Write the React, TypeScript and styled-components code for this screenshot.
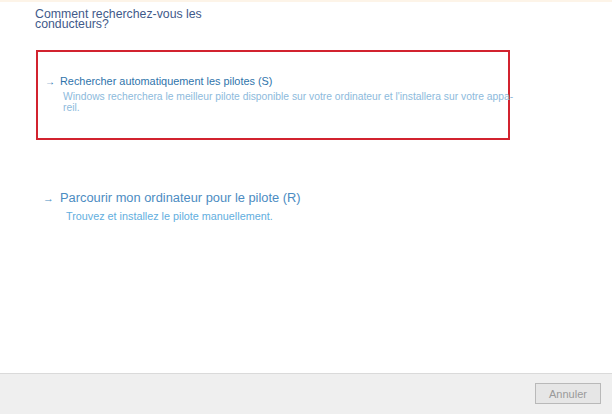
import React from 'react';
import styled, { createGlobalStyle } from 'styled-components';

const GlobalStyle = createGlobalStyle`
  html, body {
    margin: 0;
    padding: 0;
    background: #ffffff;
  }
  body {
    font-family: 'Liberation Sans', Arial, sans-serif;
  }
`;

const Window = styled.div`
  width: 612px;
  height: 414px;
  display: flex;
  flex-direction: column;
  background: #ffffff;
  border-top: 2px solid #fdf4e8;
  box-sizing: border-box;
  overflow: hidden;
`;

const Content = styled.div`
  flex: 1;
  padding: 7px 0 0 35px;
`;

const Title = styled.h1`
  margin: 0;
  width: 180px;
  font-size: 12.3px;
  font-weight: normal;
  line-height: 10px;
  color: #3f5a8a;
`;

const Option = styled.div<{ $selected?: boolean }>`
  box-sizing: border-box;
  width: 474px;
  border: 2px solid ${(p) => (p.$selected ? '#d2232f' : 'transparent')};
  padding: ${(p) => (p.$selected ? '23px 0 0 8px' : '0 0 0 8px')};
  height: ${(p) => (p.$selected ? '90px' : 'auto')};
  margin-left: 1px;
`;

const First = styled.div`
  margin-top: 21px;
`;

const Second = styled.div`
  margin-top: 48px;
  margin-left: -2px;
`;

const LinkRow = styled.div<{ $big?: boolean }>`
  display: flex;
  align-items: baseline;
  gap: ${(p) => (p.$big ? '6px' : '5px')};
  font-size: ${(p) => (p.$big ? '12.85px' : '10.9px')};
  line-height: ${(p) => (p.$big ? '16px' : '13px')};
  color: ${(p) => (p.$big ? '#4c8cc2' : '#2f74ab')};
  white-space: nowrap;
`;

const Arrow = styled.span<{ $big?: boolean }>`
  font-size: ${(p) => (p.$big ? '11px' : '10px')};
  margin-left: -1px;
`;

const Desc = styled.p<{ $big?: boolean }>`
  margin: ${(p) => (p.$big ? '5px 0 0 22px' : '3px 0 0 17px')};
  width: 456px;
  font-size: ${(p) => (p.$big ? '10.8px' : '10.3px')};
  line-height: 11px;
  color: ${(p) => (p.$big ? '#62aede' : '#8dbadc')};
  white-space: nowrap;
`;

const Footer = styled.div`
  height: 41px;
  box-sizing: border-box;
  background: #efefef;
  border-top: 1px solid #dadada;
  display: flex;
  justify-content: flex-end;
  align-items: flex-start;
  padding: 9px 11px 0 0;
`;

const Button = styled.button`
  width: 66px;
  height: 21px;
  box-sizing: border-box;
  border: 1px solid #b9b9b9;
  background: #e6e6e6;
  color: #9a9a9a;
  font-family: 'Liberation Sans', Arial, sans-serif;
  font-size: 11px;
  padding: 0;
`;

export default function App() {
  return (
    <>
      <GlobalStyle />
      <Window>
        <Content>
          <Title>Comment recherchez-vous les conducteurs?</Title>
          <First>
            <Option $selected>
              <LinkRow>
                <Arrow>→</Arrow>
                <span>Rechercher automatiquement les pilotes (S)</span>
              </LinkRow>
              <Desc>
                Windows recherchera le meilleur pilote disponible sur votre ordinateur et l'installera sur votre appa-
                <br />
                reil.
              </Desc>
            </Option>
          </First>
          <Second>
            <Option>
              <LinkRow $big>
                <Arrow $big>→</Arrow>
                <span>Parcourir mon ordinateur pour le pilote (R)</span>
              </LinkRow>
              <Desc $big>Trouvez et installez le pilote manuellement.</Desc>
            </Option>
          </Second>
        </Content>
        <Footer>
          <Button>Annuler</Button>
        </Footer>
      </Window>
    </>
  );
}
